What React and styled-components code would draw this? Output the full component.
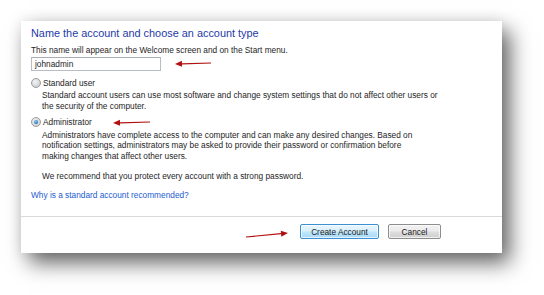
import React from 'react';
import styled, { createGlobalStyle } from 'styled-components';

const GlobalStyle = createGlobalStyle`
  html, body {
    margin: 0;
    padding: 0;
    background: #ffffff;
  }
  body {
    width: 544px;
    height: 295px;
    overflow: hidden;
    font-family: 'Liberation Sans', Arial, sans-serif;
  }
`;

const Page = styled.div`
  padding: 21px 0 0 21px;
`;

const Panel = styled.div`
  position: relative;
  width: 481px;
  height: 232px;
  background: #ffffff;
  box-shadow: 8px 10px 20px rgba(0, 0, 0, 0.6), 0 0 14px rgba(0, 0, 0, 0.08);
  display: flex;
  flex-direction: column;
`;

const Body = styled.div`
  height: 195px;
  padding: 6px 10px 0 10px;
  box-sizing: border-box;
  color: #1e1e1e;
  font-size: 8.3px;
`;

const Title = styled.div`
  color: #1e3aa8;
  font-size: 10.9px;
  line-height: 13px;
  margin-bottom: 5px;
`;

const Line = styled.div`
  line-height: 10.5px;
  margin-top: ${p => p.$top || 0}px;
  padding-left: ${p => p.$indent || 0}px;
  white-space: nowrap;
`;

const NameInput = styled.div`
  width: 130px;
  height: 14px;
  box-sizing: border-box;
  border: 1px solid #b8bcc4;
  border-top-color: #a9aeb6;
  margin-top: 1px;
  padding-left: 3px;
  line-height: 12px;
  font-size: 8.3px;
`;

const RadioRow = styled.div`
  display: flex;
  align-items: center;
  gap: 2px;
  margin-top: ${p => p.$top}px;
  line-height: 10.5px;
`;

const Radio = styled.span`
  width: 8px;
  height: 8px;
  border-radius: 50%;
  border: 1px solid #9a9da2;
  background: radial-gradient(circle at 40% 35%, #f4f4f4 0%, #d2d3d6 70%, #c2c4c8 100%);
  display: inline-flex;
  align-items: center;
  justify-content: center;
  flex-shrink: 0;
  &::after {
    content: '';
    display: ${p => (p.$checked ? 'block' : 'none')};
    width: 4px;
    height: 4px;
    border-radius: 50%;
    background: radial-gradient(circle at 40% 35%, #8fd0f5 0%, #1f6fb8 70%, #0f4f94 100%);
  }
`;

const Link = styled.div`
  color: #1e5bd0;
  line-height: 10.5px;
  margin-top: 8px;
`;

const Separator = styled.div`
  height: 1px;
  background: #dadada;
`;

const Footer = styled.div`
  flex: 1;
  display: flex;
  justify-content: flex-end;
  align-items: flex-start;
  gap: 9px;
  padding: 7px 61px 0 0;
`;

const Button = styled.button`
  height: 15px;
  width: ${p => p.$w}px;
  padding: 0;
  font-family: 'Liberation Sans', Arial, sans-serif;
  font-size: 8.3px;
  color: #1a1a1a;
  border-radius: 2px;
  border: 1px solid ${p => (p.$primary ? '#3c8fd0' : '#8d8d8d')};
  background: ${p =>
    p.$primary
      ? 'linear-gradient(#eaf6fd 0%, #d9f0fc 45%, #bee6fd 55%, #a7d9f5 100%)'
      : 'linear-gradient(#f2f2f2 0%, #ebebeb 45%, #dddddd 55%, #cfcfcf 100%)'};
  box-shadow: inset 0 0 0 1px rgba(255, 255, 255, 0.7);
`;

const Arrow = styled.svg`
  position: absolute;
  left: ${p => p.$x}px;
  top: ${p => p.$y}px;
  overflow: visible;
`;

const RedArrow = ({ x, y, x1, y1, x2, y2 }) => {
  // arrow from (x1,y1) to tip (x2,y2), coordinates local to the svg
  const ang = Math.atan2(y2 - y1, x2 - x1);
  const len = 7;
  const half = 3;
  const bx = x2 - len * Math.cos(ang);
  const by = y2 - len * Math.sin(ang);
  const px = -Math.sin(ang) * half;
  const py = Math.cos(ang) * half;
  return (
    <Arrow $x={x} $y={y} width="50" height="10">
      <line x1={x1} y1={y1} x2={bx} y2={by} stroke="#b01010" strokeWidth="1.2" />
      <polygon
        points={`${x2},${y2} ${bx + px},${by + py} ${bx - px},${by - py}`}
        fill="#b01010"
      />
    </Arrow>
  );
};

const App = () => (
  <>
    <GlobalStyle />
    <Page>
      <Panel>
        <Body>
          <Title>Name the account and choose an account type</Title>
          <Line>This name will appear on the Welcome screen and on the Start menu.</Line>
          <NameInput>johnadmin</NameInput>
          <RadioRow $top={7}>
            <Radio />
            Standard user
          </RadioRow>
          <Line $indent={11} $top={2}>
            Standard account users can use most software and change system settings that do not affect other users or
          </Line>
          <Line $indent={11}>the security of the computer.</Line>
          <RadioRow $top={6}>
            <Radio $checked />
            Administrator
          </RadioRow>
          <Line $indent={11} $top={2}>
            Administrators have complete access to the computer and can make any desired changes. Based on
          </Line>
          <Line $indent={11}>
            notification settings, administrators may be asked to provide their password or confirmation before
          </Line>
          <Line $indent={11}>making changes that affect other users.</Line>
          <Line $indent={11} $top={10}>
            We recommend that you protect every account with a strong password.
          </Line>
          <Link>Why is a standard account recommended?</Link>
        </Body>
        <Separator />
        <Footer>
          <Button $primary $w={79}>Create Account</Button>
          <Button $w={53}>Cancel</Button>
        </Footer>
        <RedArrow x={153} y={37} x1={37} y1={5} x2={1} y2={6} />
        <RedArrow x={91} y={96} x1={38} y1={5} x2={1} y2={6} />
        <RedArrow x={225} y={207} x1={0} y1={9} x2={42} y2={5} />
      </Panel>
    </Page>
  </>
);

export default App;
